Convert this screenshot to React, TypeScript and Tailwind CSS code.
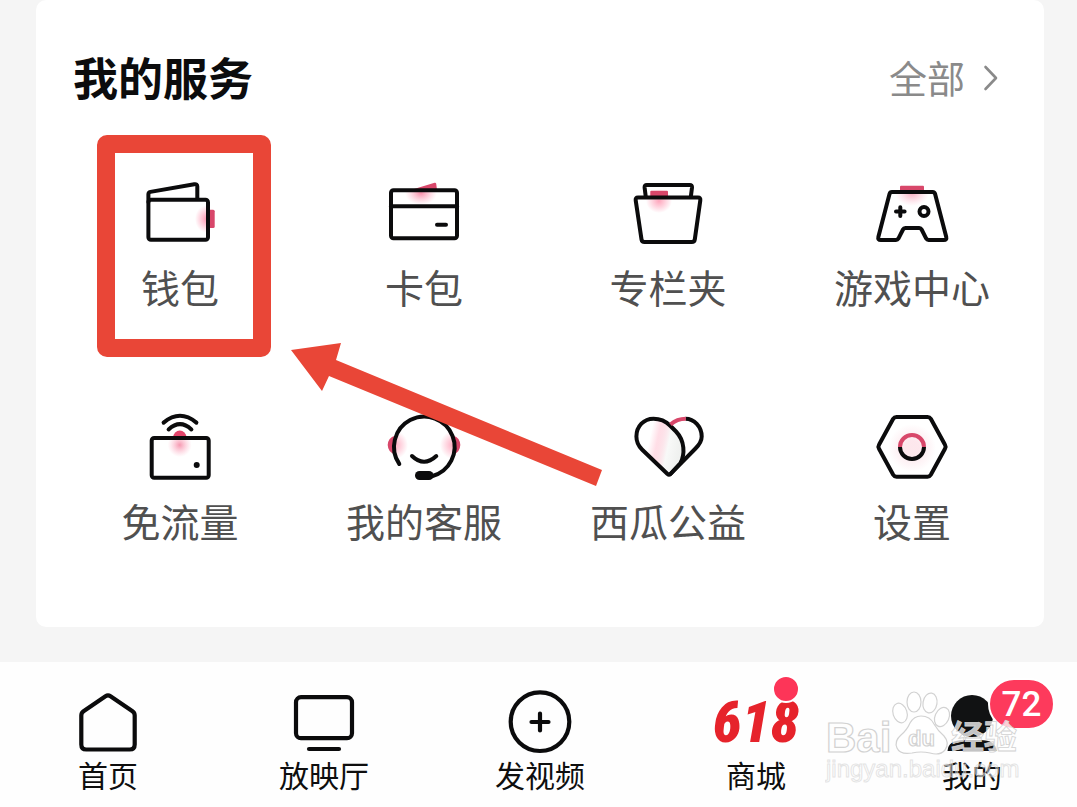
import type { ReactNode } from 'react';

const INK = '#0b0b0c';
const ROSE = '#d8476a';

function ServiceSvg({ children }: { children: ReactNode }) {
  return (
    <svg
      viewBox="0 0 80 80"
      className="size-20"
      fill="none"
      stroke={INK}
      strokeWidth="4"
      strokeLinecap="round"
      strokeLinejoin="round"
      aria-hidden="true"
    >
      {children}
    </svg>
  );
}

function WalletIcon() {
  return (
    <ServiceSvg>
      <defs>
        <radialGradient id="walletGlow">
          <stop offset="0" stopColor="#ff4f7c" stopOpacity="0.6" />
          <stop offset="1" stopColor="#ff5c86" stopOpacity="0" />
        </radialGradient>
        <clipPath id="walletClip">
          <rect x="10" y="29" width="57" height="38" />
        </clipPath>
      </defs>
      <ellipse cx="67" cy="47" rx="12" ry="14" fill="url(#walletGlow)" stroke="none" clipPath="url(#walletClip)" />
      <rect x="66" y="37.7" width="8.7" height="18.4" rx="1.5" fill={ROSE} stroke="none" />
      <rect x="8.4" y="27.8" width="59.6" height="40" rx="2.5" />
      <path d="M8.4 30V22.3q0-2 2-2.4L54.3 12.2q3-.5 3 2.3V27" />
    </ServiceSvg>
  );
}

function CardIcon() {
  return (
    <ServiceSvg>
      <defs>
        <radialGradient id="cardGlow">
          <stop offset="0" stopColor="#f0426f" stopOpacity="0.6" />
          <stop offset="1" stopColor="#ff7fa0" stopOpacity="0" />
        </radialGradient>
        <clipPath id="cardClip">
          <rect x="9" y="19" width="62" height="15" />
        </clipPath>
      </defs>
      <path d="M30 17L50.6 10.8q1.4-.3 1.6 1L53 18z" fill={ROSE} stroke="none" />
      <ellipse cx="37" cy="21" rx="16" ry="12" fill="url(#cardGlow)" stroke="none" clipPath="url(#cardClip)" />
      <rect x="7" y="18.3" width="66" height="48" rx="2.5" />
      <path d="M7 34.3H73" />
      <path d="M53 52.8h9" />
    </ServiceSvg>
  );
}

function FolderIcon() {
  return (
    <ServiceSvg>
      <defs>
        <radialGradient id="folderGlow">
          <stop offset="0" stopColor="#ff4f7c" stopOpacity="0.5" />
          <stop offset="1" stopColor="#ff4f7c" stopOpacity="0" />
        </radialGradient>
      </defs>
      <ellipse cx="31" cy="29" rx="13" ry="12" fill="url(#folderGlow)" stroke="none" />
      <rect x="22.3" y="18.7" width="17.7" height="7" rx="1" fill={ROSE} stroke="none" />
      <path d="M17.8 25L16.6 15.4q-.2-2.4 2.2-2.4h43q2.4 0 2.2 2.4L62.8 25" />
      <path d="M10 25.6H70q2.8 0 2.3 2.8L66.8 67.4q-.4 2.6-3 2.6H16.5q-2.6 0-3-2.6L7.7 28.4q-.5-2.8 2.3-2.8z" />
    </ServiceSvg>
  );
}

function GameIcon() {
  return (
    <ServiceSvg>
      <defs>
        <radialGradient id="gameGlow">
          <stop offset="0" stopColor="#f0567e" stopOpacity="0.5" />
          <stop offset="1" stopColor="#ff8fae" stopOpacity="0" />
        </radialGradient>
        <clipPath id="gameClip">
          <rect x="20" y="21" width="40" height="24" />
        </clipPath>
      </defs>
      <ellipse cx="40" cy="21" rx="17" ry="13" fill="url(#gameGlow)" stroke="none" clipPath="url(#gameClip)" />
      <rect x="28" y="13.7" width="24" height="6" rx="1" fill={ROSE} stroke="none" />
      <path d="M20 20H60.6q2 0 2.5 2L74.2 64.8q.8 3.2-2.4 3.2H56.6q-1.6 0-2.4-1.4L49.6 57.5q-.7-1.4-2.4-1.4H33.4q-1.7 0-2.4 1.4L26.4 66.6q-.8 1.4-2.4 1.4H8.8q-3.2 0-2.4-3.2L17.5 22q.5-2 2.5-2z" />
      <path d="M28.3 35.3v8.6M24 39.6h8.6" />
      <circle cx="52" cy="39.5" r="4.5" />
    </ServiceSvg>
  );
}

function RouterIcon() {
  return (
    <ServiceSvg>
      <defs>
        <radialGradient id="routerGlow">
          <stop offset="0" stopColor="#f0567e" stopOpacity="0.6" />
          <stop offset="1" stopColor="#ff8fae" stopOpacity="0" />
        </radialGradient>
      </defs>
      <circle cx="39.7" cy="39" r="12" fill="url(#routerGlow)" stroke="none" />
      <path d="M33.3 31a6.5 6.5 0 0 1 13 0z" fill="#e2456b" stroke="none" />
      <rect x="11.7" y="32" width="57" height="39.7" rx="2.5" />
      <circle cx="56.7" cy="59" r="3" fill={INK} stroke="none" />
      <path d="M23.6 16.6Q40 3 56.4 16.6" />
      <path d="M28.6 23.4Q40 13 51.4 23.4" />
    </ServiceSvg>
  );
}

function SupportIcon() {
  return (
    <ServiceSvg>
      <defs>
        <radialGradient id="cheekGlow">
          <stop offset="0" stopColor="#ff5c86" stopOpacity="0.5" />
          <stop offset="1" stopColor="#ff5c86" stopOpacity="0" />
        </radialGradient>
        <clipPath id="faceClip">
          <circle cx="40.3" cy="40.5" r="29" />
        </clipPath>
      </defs>
      <g clipPath="url(#faceClip)" stroke="none" fill="url(#cheekGlow)">
        <ellipse cx="11" cy="39" rx="13" ry="14" />
        <ellipse cx="69" cy="39" rx="13" ry="14" />
      </g>
      <path d="M11 29.7q-7 2-7.3 9.3.3 7.3 7.3 9.3z" fill={ROSE} stroke="none" />
      <path d="M69.4 29.7q6.6 2 6.9 9.3-.3 7.3-6.9 9.3z" fill={ROSE} stroke="none" />
      <path d="M15.3 58A30.3 30.3 0 1 1 48 70.2" />
      <rect x="31" y="65" width="18.5" height="9" rx="4.5" fill={INK} stroke="none" />
      <path d="M28 50q12 11.5 24.3 0" />
    </ServiceSvg>
  );
}

function HeartIcon() {
  return (
    <ServiceSvg>
      <defs>
        <linearGradient id="heartGlow" x1="0.1" y1="0.4" x2="0.9" y2="0.6">
          <stop offset="0.2" stopColor="#ff5c86" stopOpacity="0" />
          <stop offset="0.4" stopColor="#ff5c86" stopOpacity="0.2" />
          <stop offset="0.7" stopColor="#eef0ee" stopOpacity="0.4" />
          <stop offset="1" stopColor="#d8dcd8" stopOpacity="0.4" />
        </linearGradient>
      </defs>
      <path
        d="M39.5 68L14 43.5C9.5 39 8.4 35 8.4 30.5C8.4 20 16 12.7 25.5 12.7C32 12.7 37.5 15 42 19.5L48 25.5C57 35 57 48 52.5 57L42.5 68Q41 69.3 39.5 68z"
        fill="url(#heartGlow)"
      />
      <path d="M42 68.3L67.5 42.5C71.5 38.5 73.7 35 73.7 30.5C73.7 20.5 66 12.7 57.5 12.7" strokeLinecap="butt" />
      <path d="M57.8 12.7Q49 12.7 42.5 18.5" stroke={ROSE} strokeLinecap="butt" />
    </ServiceSvg>
  );
}

function SettingsIcon() {
  return (
    <ServiceSvg>
      <defs>
        <radialGradient id="settingsGlow">
          <stop offset="0.3" stopColor="#f06a8c" stopOpacity="0.16" />
          <stop offset="1" stopColor="#f06a8c" stopOpacity="0" />
        </radialGradient>
      </defs>
      <circle cx="40" cy="42" r="24" fill="url(#settingsGlow)" stroke="none" />
      <path d="M24.5 11H55.5q2.2 0 3.3 1.8L73 38.8q1.2 2 0 4L58.8 68.8q-1.1 1.9-3.3 1.9H24.5q-2.2 0-3.3-1.9L7 42.8q-1.2-2 0-4L21.2 12.8q1.1-1.8 3.3-1.8z" />
      <path d="M28 41a12 12 0 0 1 24 0" stroke={ROSE} strokeLinecap="butt" />
      <path d="M28 41a12 12 0 0 0 24 0" strokeLinecap="butt" />
    </ServiceSvg>
  );
}

const services = [
  { label: '钱包', icon: <WalletIcon />, marked: true },
  { label: '卡包', icon: <CardIcon /> },
  { label: '专栏夹', icon: <FolderIcon /> },
  { label: '游戏中心', icon: <GameIcon /> },
  { label: '免流量', icon: <RouterIcon /> },
  { label: '我的客服', icon: <SupportIcon /> },
  { label: '西瓜公益', icon: <HeartIcon /> },
  { label: '设置', icon: <SettingsIcon /> },
];

function NavSvg({ children }: { children: ReactNode }) {
  return (
    <svg
      viewBox="0 0 72 72"
      className="size-[72px]"
      fill="none"
      stroke={INK}
      strokeWidth="4.2"
      strokeLinecap="round"
      strokeLinejoin="round"
      aria-hidden="true"
    >
      {children}
    </svg>
  );
}

const tabs = [
  {
    label: '首页',
    icon: (
      <NavSvg>
        <path d="M33.5 10.3q2.5-1.7 5 0L60.5 25.3q2.2 1.6 2.2 4.2V58.5q0 5-5 5H14.3q-5 0-5-5V29.5q0-2.6 2.2-4.2z" />
      </NavSvg>
    ),
  },
  {
    label: '放映厅',
    icon: (
      <NavSvg>
        <rect x="8" y="11.2" width="56" height="41" rx="5" />
        <path d="M21 63H51" />
      </NavSvg>
    ),
  },
  {
    label: '发视频',
    icon: (
      <NavSvg>
        <circle cx="36" cy="35.7" r="29.3" />
        <path d="M36 27.5v17M27.5 36h17" />
      </NavSvg>
    ),
  },
  {
    label: '商城',
    icon: (
      <span className="relative flex h-[72px] w-[84px] items-center justify-center">
        <span className="font-['Roboto_Condensed','Roboto',sans-serif] text-[58px] leading-[72px] font-black text-[#e6232b] italic">
          618
        </span>
        <span className="absolute -top-[11px] -right-0.5 size-7 rounded-full border-2 border-white bg-[#fd3558]" />
      </span>
    ),
  },
  {
    label: '我的',
    icon: (
      <span className="relative">
        <NavSvg>
          <circle cx="36" cy="30" r="21" fill="#111213" stroke="none" />
          <path d="M11.5 65Q12 54 28 54H44Q60 54 60.5 65z" fill="#111213" stroke="none" />
        </NavSvg>
        <span className="absolute -top-2 left-[52px] z-10 flex h-[52px] w-[67px] items-center justify-center rounded-full border-2 border-white bg-[#fd3a5c] font-['Roboto',sans-serif] text-[35px] leading-none font-medium text-white">
          72
        </span>
      </span>
    ),
  },
];

function Watermark() {
  return (
    <svg
      viewBox="0 0 196 96"
      className="pointer-events-none absolute top-[26px] right-[59px] z-20 h-24 w-[196px]"
      fill="#ffffff"
      fillOpacity="0.75"
      stroke="#d2d2d2"
      strokeWidth="1.2"
      aria-label="Baidu 经验"
    >
      <text x="1" y="64" fontSize="42" fontWeight="700" fontFamily="Liberation Sans, Arial, sans-serif">
        Bai
      </text>
      <ellipse cx="75" cy="25" rx="7" ry="10" transform="rotate(-18 75 25)" />
      <ellipse cx="89" cy="14" rx="7" ry="10" />
      <ellipse cx="105" cy="15" rx="7" ry="10" transform="rotate(10 105 15)" />
      <ellipse cx="117" cy="29" rx="7" ry="10" transform="rotate(24 117 29)" />
      <path d="M96 28q9 0 13 8 4 7 10 12 6 7 1 14-5 6-15 3-9-2-18 0-12 2-15-5-3-7 4-13 6-5 9-12 4-7 11-7z" />
      <text x="83" y="58" fontSize="22" fontWeight="700" fontFamily="Liberation Sans, Arial, sans-serif">
        du
      </text>
      <text x="126" y="61" fontSize="33" fontWeight="700" strokeWidth="0.8" fontFamily="Noto Sans CJK SC, sans-serif">
        经验
      </text>
      <text
        x="1"
        y="89"
        fontSize="24"
        fillOpacity="0.4"
        strokeOpacity="0.6"
        strokeWidth="1"
        fontFamily="Liberation Sans, Arial, sans-serif"
      >
        jingyan.baidu.com
      </text>
    </svg>
  );
}

export default function App() {
  return (
    <div className="overflow-x-hidden bg-[#f5f5f5] font-['Noto_Sans_CJK_SC',sans-serif]">
      <div className="-mr-[3px] flex min-h-screen flex-col justify-between">
        <main className="px-9">
          <section className="rounded-[10px] bg-white pt-[49px] pb-[82px]">
            <header className="flex items-center justify-between pr-[45px] pl-[37px]">
              <h1 className="text-[45px] leading-[56px] font-bold text-[#0c0c0d]">我的服务</h1>
              <a href="#all" className="flex items-center gap-[18px] text-[38px] leading-[56px] text-[#8a8a8a]">
                全部
                <svg
                  viewBox="0 0 16 28"
                  className="h-7 w-4"
                  fill="none"
                  stroke="#8a8a8a"
                  strokeWidth="2.6"
                  strokeLinecap="round"
                  strokeLinejoin="round"
                  aria-hidden="true"
                >
                  <path d="M2.5 4L13 15L2.5 26" />
                </svg>
              </a>
            </header>
            <div className="relative mt-[67px] mr-2.5 ml-[22px]">
              <ul className="grid grid-cols-4 gap-y-[95px]">
                {services.map((s) => (
                  <li key={s.label} className="relative flex justify-center">
                    <button type="button" className="flex flex-col items-center gap-[9px]">
                      {s.icon}
                      <span className="text-[39px] leading-[50px] text-[#505050]">{s.label}</span>
                    </button>
                    {s.marked && (
                      <span className="pointer-events-none absolute -top-[37px] left-1/2 -ml-[83px] h-[222px] w-[174px] rounded-[10px] border-[18px] border-[#e94637]" />
                    )}
                  </li>
                ))}
              </ul>
              <svg
                viewBox="0 0 312 144"
                className="pointer-events-none absolute top-[171px] left-[233px] h-36 w-[312px]"
                fill="#e94637"
                aria-hidden="true"
              >
                <path d="M0 7L50 0L45 17L311 127L305 143L38 33L31 48z" />
              </svg>
            </div>
          </section>
        </main>
        <nav className="relative mt-[35px] bg-[#fefefe] pt-6 pb-[17px]">
          <ul className="grid grid-cols-5">
            {tabs.map((t) => (
              <li key={t.label} className="flex justify-center">
                <button type="button" className="flex flex-col items-center">
                  {t.icon}
                  <span className="text-[30px] leading-8 text-[#0e0e0e]">{t.label}</span>
                </button>
              </li>
            ))}
          </ul>
          <Watermark />
        </nav>
      </div>
    </div>
  );
}
